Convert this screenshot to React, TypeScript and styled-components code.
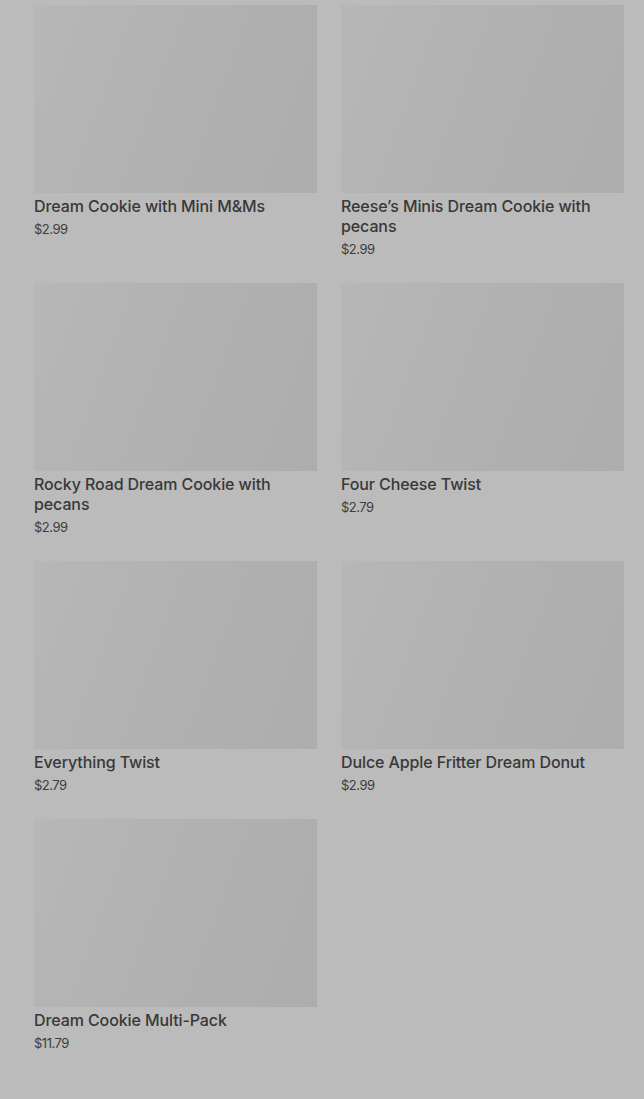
import React from "react";
import styled, { createGlobalStyle } from "styled-components";

const Global = createGlobalStyle`
  html, body { margin: 0; padding: 0; background: #bbbbbb; }
  body { font-family: Inter, "Noto Sans", sans-serif; }
`;

const Page = styled.div`
  min-height: 1099px;
  background: #bbbbbb;
  padding: 5px 20px 0 34px;
  box-sizing: border-box;
`;

const Grid = styled.div`
  display: grid;
  grid-template-columns: 283px 283px;
  column-gap: 24px;
  row-gap: 26px;
  align-items: start;
`;

const Card = styled.div`
  display: flex;
  flex-direction: column;
`;

const Thumb = styled.div`
  width: 283px;
  height: 188px;
  background: linear-gradient(110deg, #b7b7b7 0%, #b1b1b1 50%, #adadad 100%);
`;

const Title = styled.div`
  margin-top: 3px;
  font-size: 16px;
  line-height: 20px;
  font-weight: 500;
  letter-spacing: -0.1px;
  color: #383838;
`;

const Price = styled.div`
  margin-top: 5px;
  font-size: 13px;
  line-height: 16px;
  color: #3d3d3d;
  letter-spacing: -0.5px;
`;

const items = [
  { name: "Dream Cookie with Mini M&Ms", price: "$2.99" },
  { name: "Reese’s Minis Dream Cookie with pecans", price: "$2.99" },
  { name: "Rocky Road Dream Cookie with pecans", price: "$2.99" },
  { name: "Four Cheese Twist", price: "$2.79" },
  { name: "Everything Twist", price: "$2.79" },
  { name: "Dulce Apple Fritter Dream Donut", price: "$2.99" },
  { name: "Dream Cookie Multi-Pack", price: "$11.79" },
];

export default function App() {
  return (
    <Page>
      <Global />
      <Grid>
        {items.map((it) => (
          <Card key={it.name}>
            <Thumb />
            <Title>{it.name}</Title>
            <Price>{it.price}</Price>
          </Card>
        ))}
      </Grid>
    </Page>
  );
}
